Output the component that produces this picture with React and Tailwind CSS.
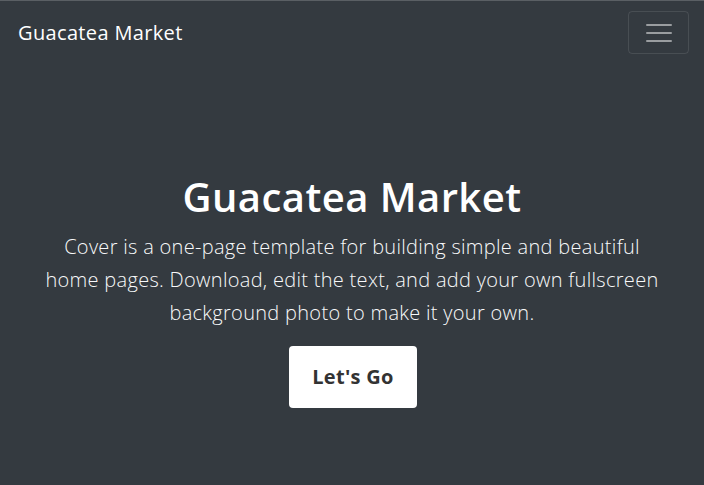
export default function App() {
  return (
    <div className="min-h-screen bg-[#343a40] border-t border-[#5a5f64] text-white font-['Open_Sans',sans-serif] flex flex-col">
      <nav className="flex items-center justify-between h-[63px] pl-[18px] pr-[15px]">
        <span className="text-[20px] leading-none tracking-[0.35px]">Guacatea Market</span>
        <button className="w-[61px] h-[43px] rounded-[4px] border border-white/10 flex flex-col items-center justify-center gap-[6px]">
          <span className="block w-[26px] h-[2px] bg-white/50 rounded"></span>
          <span className="block w-[26px] h-[2px] bg-white/50 rounded"></span>
          <span className="block w-[26px] h-[2px] bg-white/50 rounded"></span>
        </button>
      </nav>
      <main className="flex flex-col items-center text-center pt-[109px] px-4">
        <h1 className="text-[40px] leading-[48px] font-semibold tracking-[0.45px]">Guacatea Market</h1>
        <p className="mt-[9px] text-[20px] leading-[33px] font-light tracking-[0.3px] text-[#f8f9fa]">
          Cover is a one-page template for building simple and beautiful<br />
          home pages. Download, edit the text, and add your own fullscreen<br />
          background photo to make it your own.
        </p>
        <button className="mt-[17px] ml-[2px] h-[62px] px-[23px] bg-white rounded-[4px] text-[#333] text-[20px] font-bold tracking-[0.3px]">
          Let's Go
        </button>
      </main>
    </div>
  )
}
